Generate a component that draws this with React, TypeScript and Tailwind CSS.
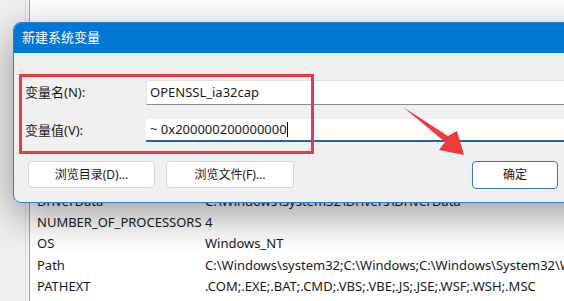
import React from "react";

const font = { fontFamily: '"Noto Sans", "Noto Sans CJK SC", sans-serif' };

const rows: [string, string][] = [
  ["DriverData", "C:\\Windows\\System32\\Drivers\\DriverData"],
  ["NUMBER_OF_PROCESSORS", "4"],
  ["OS", "Windows_NT"],
  ["Path", "C:\\Windows\\system32;C:\\Windows;C:\\Windows\\System32\\Wbem"],
  ["PATHEXT", ".COM;.EXE;.BAT;.CMD;.VBS;.VBE;.JS;.JSE;.WSF;.WSH;.MSC"],
];

export default function App() {
  return (
    <div className="relative w-[564px] h-[301px] overflow-hidden bg-white text-[13px] text-[#1a1a1a]" style={font}>
      {/* background window */}
      <div className="flex h-full">
        <div className="w-[26px] shrink-0 bg-[#f0f0f0] border-r border-[#dcdcdc]" />
        <div className="w-[4px] shrink-0 bg-[#f3f3f3] border-r border-[#a0a0a0]" />
        <div className="flex-1 min-w-0 overflow-hidden flex flex-col pt-[191px]">
          {rows.map(([k, v]) => (
            <div key={k} className="flex h-[21.3px] items-center whitespace-nowrap text-[13px]">
              <div className="w-[175px] pl-[7px] shrink-0">{k}</div>
              <div className="shrink-0">{v}</div>
            </div>
          ))}
        </div>
      </div>

      {/* shadow under dialog */}
      <div className="absolute left-[13px] top-[22px] w-[600px] h-[181px] rounded-[8px] shadow-[0_12px_40px_rgba(0,0,0,0.4)]" />

      {/* dialog */}
      <div className="absolute left-[13px] top-[22px] w-[600px] h-[181px] rounded-[8px] border border-[#2a7fd0] overflow-hidden flex flex-col bg-[#f0f0f0]">
        <div className="h-[30px] bg-[#0078d4] flex items-center pl-[8px] text-white text-[13px] shrink-0">
          新建系统变量
        </div>
        <div className="flex flex-col pl-[11px] pt-[27px]">
          <div className="flex items-center h-[25px]">
            <div className="w-[121px] shrink-0 text-[13px]">变量名(N):</div>
            <div className="w-[440px] h-[25px] bg-white border border-[#e2e2e2] border-b-[#8a8a8a] rounded-t-[3px] flex items-center pl-[3px] text-[13px]">
              OPENSSL_ia32cap
            </div>
          </div>
          <div className="flex items-center h-[23px] mt-[14px]">
            <div className="w-[121px] shrink-0 text-[13px]">变量值(V):</div>
            <div className="w-[440px] h-[23px] bg-white border-b-2 border-[#1f65a8] rounded-t-[3px] flex items-center pl-[4px] text-[13px]">
              <span>~ 0x200000200000000</span>
              <span className="inline-block w-[1px] h-[15px] bg-black" />
            </div>
          </div>
          <div className="flex mt-[19px] pl-[3px]">
            <div className="w-[127px] h-[27px] bg-[#fdfdfd] border border-[#d6d6d6] rounded-[4px] flex items-center justify-center text-[12px]">
              浏览目录(D)...
            </div>
            <div className="w-[128px] h-[27px] ml-[11px] bg-[#fdfdfd] border border-[#d6d6d6] rounded-[4px] flex items-center justify-center text-[12px]">
              浏览文件(F)...
            </div>
            <div className="w-[86px] h-[28px] ml-[178px] bg-[#fdfdfd] border border-[#3b76b4] rounded-[4px] flex items-center justify-center text-[12px]">
              确定
            </div>
          </div>
        </div>
      </div>

      {/* annotation red box */}
      <div className="absolute left-[19px] top-[74px] w-[295px] h-[80px] border-[3px] border-[#e63c40]" />

      {/* annotation arrow */}
      <svg className="absolute left-0 top-0" width="564" height="301" viewBox="0 0 564 301">
        <polygon
          points="403,107 448,136 457,131 464,155 439,150 445,142"
          fill="#ee3b3b"
        />
      </svg>
    </div>
  );
}
